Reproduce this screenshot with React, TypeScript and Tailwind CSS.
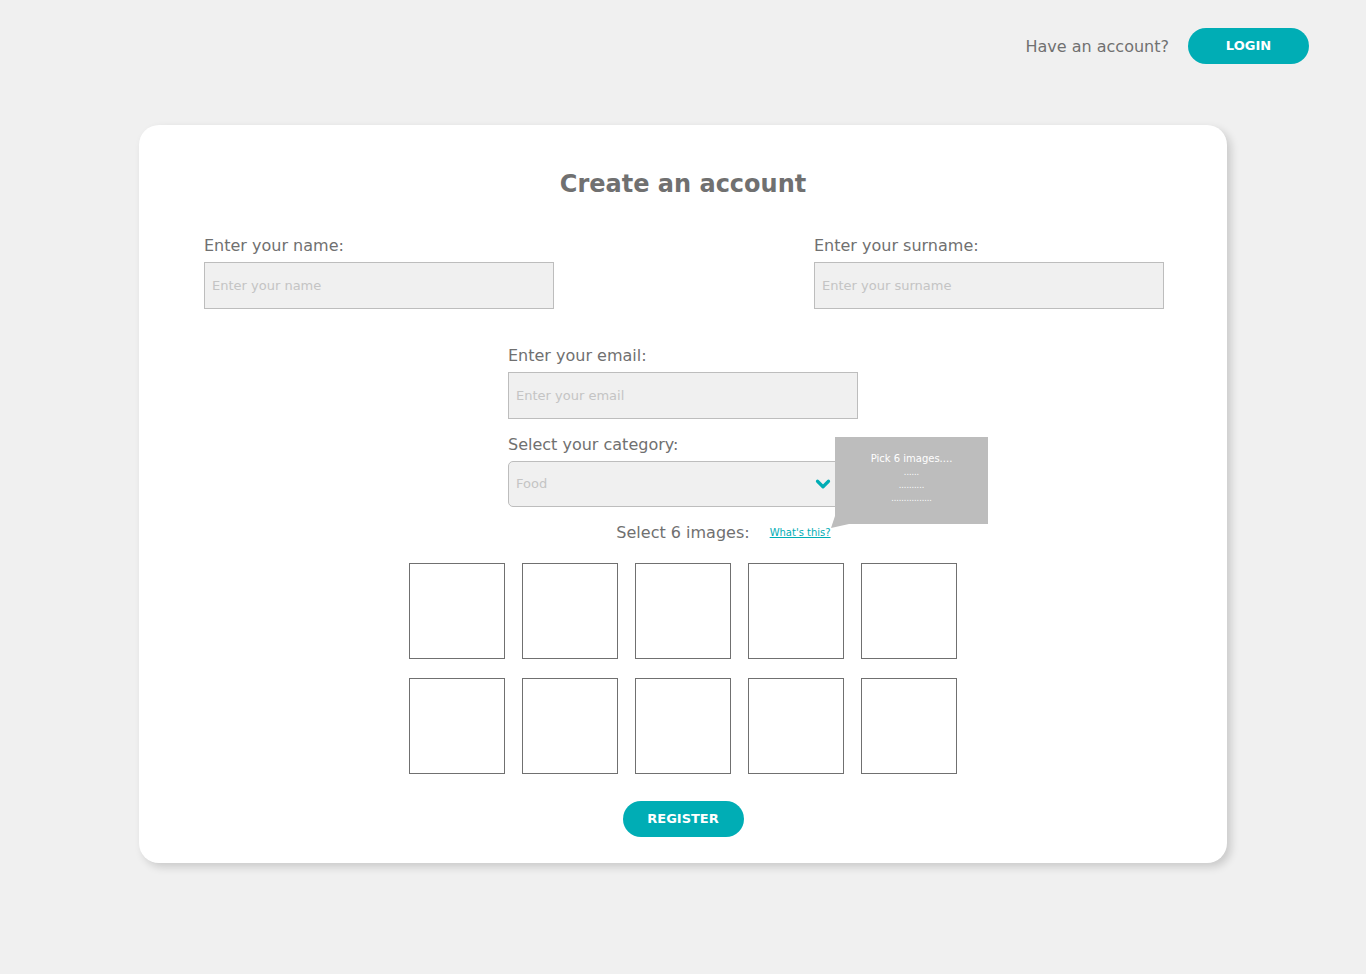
import { ChevronDown } from 'lucide-react'

const font = { fontFamily: '"DejaVu Sans", sans-serif' }

function Field({ label, placeholder }: { label: string; placeholder: string }) {
  return (
    <div className="w-[350px]">
      <label className="block text-[16px] leading-[20px] text-[#707070]">{label}</label>
      <input
        placeholder={placeholder}
        className="mt-[6px] block h-[47px] w-full border border-[#bdbdbd] bg-[#f0f0f0] px-[7px] text-[13px] text-[#707070] outline-none placeholder:text-[#c4c4c4]"
      />
    </div>
  )
}

export default function App() {
  return (
    <div className="min-h-[974px] bg-[#f0f0f0]" style={font}>
      <header className="flex items-center justify-end gap-[19px] pr-[57px] pt-[28px]">
        <span className="mt-[1px] text-[16px] text-[#707070]">Have an account?</span>
        <button className="h-[36px] w-[121px] rounded-full bg-[#00adb5] text-[13px] font-bold text-white">
          LOGIN
        </button>
      </header>

      <main className="mx-auto mt-[61px] w-[1088px] rounded-[20px] bg-white px-[64px] pb-[26px] pt-[42px] shadow-[4px_4px_8px_rgba(0,0,0,0.16)]">
        <h1 className="text-center text-[24px] font-bold leading-[34px] text-[#707070]">Create an account</h1>

        <div className="-mr-[1px] mt-[35px] flex justify-between pl-[1px]">
          <Field label="Enter your name:" placeholder="Enter your name" />
          <Field label="Enter your surname:" placeholder="Enter your surname" />
        </div>

        <div className="mt-[37px] flex justify-center">
          <Field label="Enter your email:" placeholder="Enter your email" />
        </div>

        <div className="mt-[16px] flex justify-center">
          <div className="relative w-[350px]">
            <label className="block text-[16px] leading-[20px] text-[#707070]">Select your category:</label>
            <div className="mt-[6px] flex h-[46px] items-center justify-between rounded-[5px] border border-[#bdbdbd] bg-[#f0f0f0] pl-[7px] pr-[23px]">
              <span className="text-[13px] text-[#c4c4c4]">Food</span>
              <ChevronDown size={22} strokeWidth={3.5} className="text-[#00adb5]" />
            </div>

            {/* tooltip */}
            <div className="absolute left-[327px] top-[2px] flex h-[87px] w-[153px] flex-col items-center bg-[#bdbdbd] pt-[15px] text-white">
              <span className="text-[10px] leading-[13px]">Pick 6 images....</span>
              <span className="mt-[1px] text-[8px] leading-[13px]">......</span>
              <span className="text-[8px] leading-[13px]">..........</span>
              <span className="text-[8px] leading-[13px]">................</span>
              <svg className="absolute left-[-4px] top-[70px]" width="24" height="22" viewBox="0 0 24 22">
                <polygon points="4,0 4,9 0,21 18,17 18,0" fill="#bdbdbd" />
              </svg>
            </div>
          </div>
        </div>

        <div className="mt-[14px] flex justify-center">
          <div className="relative">
            <span className="text-[16px] leading-[20px] text-[#707070]">Select 6 images:</span>
            <a href="#" className="absolute left-full top-[4px] ml-[20px] whitespace-nowrap text-[10px] text-[#00adb5] underline">
              What's this?
            </a>
          </div>
        </div>

        <div className="mt-[18px] flex justify-center">
          <div className="grid grid-cols-5 gap-x-[17px] gap-y-[19px]">
            {Array.from({ length: 10 }).map((_, i) => (
              <div key={i} className="h-[96px] w-[96px] border border-[#707070]" />
            ))}
          </div>
        </div>

        <div className="mt-[27px] flex justify-center">
          <button className="h-[36px] w-[121px] rounded-full bg-[#00adb5] text-[13px] font-bold text-white">
            REGISTER
          </button>
        </div>
      </main>
    </div>
  )
}
